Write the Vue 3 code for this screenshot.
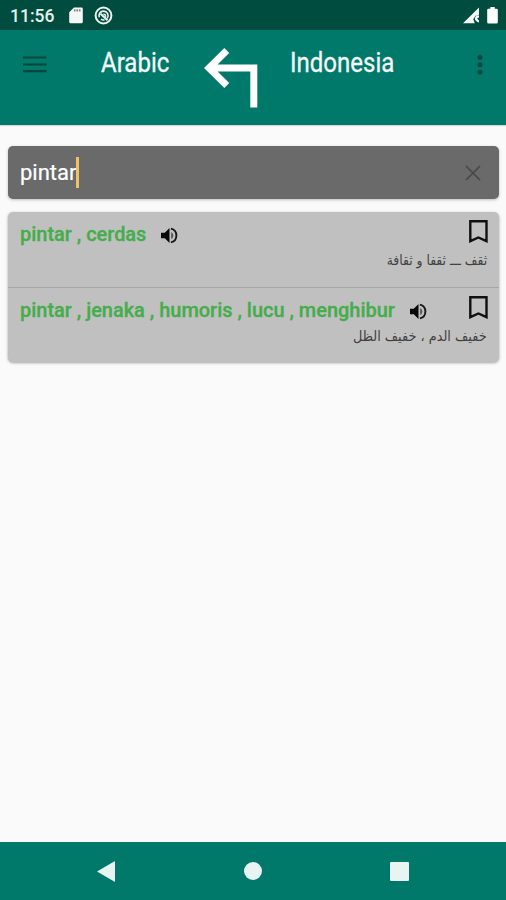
<script setup>
const entries = [
  { words: 'pintar , cerdas', arabic: 'ثقف ـــ ثقفا و ثقافة', size: 'first' },
  { words: 'pintar , jenaka , humoris , lucu , menghibur', arabic: 'خفيف الدم ، خفيف الظل', size: 'second' },
]
</script>

<template>
  <div class="screen">
    <div class="status">
      <span class="clock">11:56</span>
      <svg class="sd" width="14" height="17" viewBox="0 0 14 17"><path d="M5 .5h7.500a1.300 1.300 0 0 1 1.300 1.300v13a1.500 1.500 0 0 1-1.500 1.500H1.700A1.500 1.500 0 0 1 .2 14.800V5.300z" fill="#f4f7f5" /><path d="M5.700 2.300v2.200M8.200 2.300v2.200M10.700 2.300v2.200" stroke="#6d8e87" stroke-width="1.600" /></svg>
      <svg class="disc" width="19" height="19" viewBox="0 0 19 19" fill="none" stroke="#edf3f1"><circle cx="9.500" cy="9.500" r="7.900" stroke-width="2" /><path d="M5.300 11.200A4.500 4.500 0 0 1 9.500 5.100a4.500 4.500 0 0 1 3.700 7.200" stroke-width="1.600" /><path d="M6.500 7.700l7 6.600" stroke-width="2" /><path d="M7 13.200q1.700 1.200 3.500.6M9.300 8.200q2.500-.2 2.200 2.600" stroke-width="1.500" /></svg>
      <svg class="signal" width="18" height="17" viewBox="0 0 18 17"><path d="M0 16.300L16 .5V8l-3.500.8-2.200 3.500 1.500 4z" fill="#f4f7f5" /><path d="M12 10.500l1.500-2.300 2.500.2v2l-2 1 2 2v2.200l-2-.8-2-2z" fill="#f4f7f5" /></svg>
      <svg class="battery" width="11" height="17" viewBox="0 0 11 17"><path d="M3.300 0h4.400v1.700h1.800a1.300 1.300 0 0 1 1.300 1.300v12.300a1.300 1.300 0 0 1-1.300 1.300h-8A1.300 1.300 0 0 1 .2 15.300V3a1.300 1.300 0 0 1 1.300-1.300h1.800z" fill="#fff" /></svg>
    </div>
    <header class="bar">
      <svg class="menu" width="24" height="18" viewBox="0 0 24 18"><path d="M0 2.500h23.500M0 9.500h23.500M0 16.200h23.500" stroke="#06463b" stroke-width="2.200" /></svg>
      <span class="lang from">Arabic</span>
      <svg class="swap" width="55" height="61" viewBox="0 0 55 61"><path d="M23.800 3.500L6 21 23.800 38.500M7 21H50.800V60.500" fill="none" stroke="#fff" stroke-width="7" /></svg>
      <span class="lang to">Indonesia</span>
      <svg class="more" width="6" height="20" viewBox="0 0 6 20" fill="#07473c"><circle cx="3" cy="2.500" r="2.500" /><circle cx="3" cy="9.800" r="2.500" /><circle cx="3" cy="17.200" r="2.500" /></svg>
    </header>
    <main class="content">
      <div class="search">
        <span class="query">pintar</span><i class="caret"></i>
        <svg class="clear" width="16" height="16" viewBox="0 0 16 16"><path d="M1 1l14 14M15 1L1 15" stroke="#484848" stroke-width="1.700" /></svg>
      </div>
      <div class="results">
        <section v-for="e in entries" :key="e.words" class="entry" :class="e.size">
          <div class="head">
            <span class="words">{{ e.words }}</span>
            <svg class="speaker" width="17" height="17" viewBox="0 0 18 18"><path d="M0 6v6h4l5 5V1L4 6z" fill="#090909" /><path d="M10.800 5.200v7.600a4.300 4.300 0 0 0 0-7.600z" fill="#555" /><path d="M10.500 1.700a7.500 7.500 0 0 1 0 14.600" fill="none" stroke="#171717" stroke-width="2" /></svg>
            <svg class="mark" width="19" height="23" viewBox="0 0 19 23"><path d="M1.300 1.300h16.200v19.900l-8.100-3.700-8.100 3.700z" fill="none" stroke="#101010" stroke-width="2.400" /></svg>
          </div>
          <div class="arabic" dir="rtl" lang="ar"><span>{{ e.arabic }}</span></div>
        </section>
      </div>
    </main>
    <nav class="nav">
      <svg width="18" height="21" viewBox="0 0 18 21"><path d="M0 10.500L18 0v21z" fill="#e8f4f2" /></svg>
      <svg class="home" width="18" height="18" viewBox="0 0 18 18"><circle cx="9" cy="9" r="9" fill="#e8f4f2" /></svg>
      <svg width="19" height="19" viewBox="0 0 19 19"><rect width="19" height="19" rx="1" fill="#e8f4f2" /></svg>
    </nav>
  </div>
</template>

<style>
body { margin: 0; background: #fafafa; }
</style>

<style scoped>
.screen { width: 506px; height: 900px; display: flex; flex-direction: column; overflow: hidden; background: #fafafa; font-family: Roboto, "Liberation Sans", sans-serif; }
svg { display: block; flex: none; }
.status { height: 30px; flex: none; display: flex; align-items: flex-start; background: #004d40; box-sizing: border-box; padding: 7px 8px 0 10px; }
.clock { width: 58px; font-size: 17.500px; line-height: 19px; font-weight: 500; color: #e7efed; }
.sd { margin-left: 1px; }
.disc { margin: -1px 0 0 11px; }
.signal { margin-left: auto; }
.battery { margin-left: 6px; }
.bar { height: 95px; flex: none; display: flex; align-items: flex-start; box-sizing: border-box; background: #00796b; border-bottom: 1px solid #0d7164; box-shadow: 0 1px 1px #ccdcda; }
.menu { margin: 25px 0 0 23px; }
.lang { display: block; font-size: 27px; line-height: 32px; margin-top: 17px; color: #f5faf9; white-space: nowrap; transform-origin: left; transform: scaleX(.89); -webkit-text-stroke: .3px #f5faf9; }
.from { width: 102px; margin-left: 54px; }
.swap { margin-top: 17px; }
.to { width: 157px; margin-left: 32px; }
.more { margin-top: 25px; margin-left: auto; margin-right: 23px; }
.content { flex: 1; padding: 21px 7px 0 8px; }
.search { height: 53px; box-sizing: border-box; display: flex; align-items: center; padding: 0 18px 0 12px; background: #6a6a6a; border-radius: 5px; box-shadow: 0 1px 3px #8888; }
.query { font-size: 22px; line-height: 28px; padding-top: 1px; color: #fff; -webkit-text-stroke: .2px #fff; }
.caret { width: 2.500px; height: 31px; background: #edc365; }
.clear { margin-left: auto; }
.results { margin-top: 13px; height: 150px; border-radius: 5px; background: #c0c0c0; box-shadow: 0 1px 3px #777a; }
.entry { height: 76px; box-sizing: border-box; padding: 7px 11px 0 12px; }
.first { border-bottom: 1px solid #a6a6a6; }
.head { display: flex; height: 31px; align-items: flex-start; }
.words { font-size: 19.960px; line-height: 30px; font-weight: 500; color: #45ad4b; white-space: nowrap; -webkit-text-stroke: .3px #45ad4b; }
.speaker { margin: 8px 0 0 15px; }
.mark { margin-left: auto; margin-top: 1px; }
.arabic { height: 24px; line-height: 21px; padding-right: 1px; font-family: "DejaVu Sans", sans-serif; font-size: 14px; color: #404040; }
.arabic span { display: inline-block; transform-origin: right; white-space: nowrap; }
.first .arabic span { transform: scaleX(.88); }
.second .arabic span { transform: scaleX(.918); }
.nav { height: 58px; flex: none; display: flex; align-items: center; justify-content: space-between; box-sizing: border-box; padding: 0 97px; background: #00796b; }
.home { margin-left: 1px; }
</style>
